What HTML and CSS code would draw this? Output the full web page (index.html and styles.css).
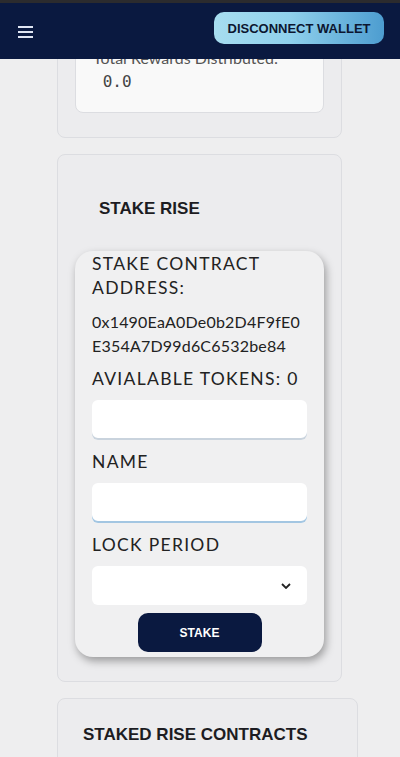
FILE: index.html
```html
<!DOCTYPE html>
<html lang="en">
<head>
    <meta charset="UTF-8">
    <meta name="viewport" content="width=device-width, initial-scale=1.0">
    <title>Stake Rise</title>
    <link rel="stylesheet" href="styles.css">
</head>
<body>
    <header class="topbar">
        <button class="menu-btn" aria-label="Menu">
            <svg width="15" height="12" viewBox="0 0 15 12">
                <rect x="0" y="0" width="15" height="2" fill="#dfe5f3"/>
                <rect x="0" y="5" width="15" height="2" fill="#dfe5f3"/>
                <rect x="0" y="10" width="15" height="2" fill="#dfe5f3"/>
            </svg>
        </button>
        <button class="wallet-btn">DISCONNECT WALLET</button>
    </header>

    <main class="page">
        <div class="card">
            <div class="info-box">
                <div class="info-label">Total Rewards Distributed:</div>
                <pre class="info-value"> 0.0</pre>
            </div>
        </div>

        <div class="card card-stake">
            <h2 class="card-title">STAKE RISE</h2>
            <div class="stake-box">
                <div class="field-label">STAKE CONTRACT ADDRESS:</div>
                <div class="address">0x1490EaA0De0b2D4F9fE0E354A7D99d6C6532be84</div>
                <div class="field-label">AVIALABLE TOKENS: 0</div>
                <input type="text" class="text-input">
                <div class="field-label">NAME</div>
                <input type="text" class="text-input focused">
                <div class="field-label">LOCK PERIOD</div>
                <div class="select-box">
                    <svg width="10" height="6" viewBox="0 0 10 6">
                        <path d="M1 1 L5 5 L9 1" fill="none" stroke="#222" stroke-width="1.8"/>
                    </svg>
                </div>
                <div class="stake-row">
                    <button class="stake-btn">STAKE</button>
                </div>
            </div>
        </div>

        <div class="card card-wide">
            <h2 class="card-title-plain">STAKED RISE CONTRACTS</h2>
        </div>
    </main>
</body>
</html>
```

FILE: styles.css
```css
body {
    margin: 0;
    background-color: #eeeeef;
    font-family: Lato, "Open Sans", sans-serif;
    color: #222;
}
.topbar {
    position: fixed;
    top: 0;
    left: 0;
    right: 0;
    height: 56px;
    border-top: 3px solid #2b2b2e;
    background-color: #0a1940;
    display: flex;
    align-items: center;
    justify-content: space-between;
    padding: 0 16px 0 18px;
    z-index: 10;
}
.menu-btn {
    background: none;
    border: none;
    padding: 0;
    margin-top: 2px;
    display: flex;
}
.wallet-btn {
    height: 32px;
    width: 170px;
    margin-top: -6px;
    border: none;
    border-radius: 10px;
    background: linear-gradient(90deg, #a7ddf0 0%, #8fd0ec 45%, #4d9dd0 100%);
    font-family: "Liberation Sans", Arial, sans-serif;
    font-weight: bold;
    font-size: 13px;
    color: #0c1630;
    padding: 0;
}
.page {
    padding: 11px 0 40px 57px;
}
.card {
    border: 1px solid #dcdde1;
    border-radius: 8px;
    background-color: #ececee;
    padding: 17px;
    padding-bottom: 24px;
    box-sizing: border-box;
    width: 285px;
    margin-bottom: 16px;
}
.info-box {
    background-color: #f9f9f9;
    border: 1px solid #dcdde1;
    border-radius: 8px;
    padding: 17px 17px 19px 17px;
}
.info-label {
    font-size: 16px;
    line-height: 22px;
    color: #555;
}
.info-value {
    margin: 2px 0 0 0;
    font-family: "DejaVu Sans Mono", monospace;
    font-size: 16px;
    line-height: 22px;
    color: #444;
}
.card-stake {
    padding-bottom: 24px;
}
.card-title {
    margin: 26px 0 31px 24px;
    font-family: "Liberation Sans", Arial, sans-serif;
    font-weight: bold;
    font-size: 17px;
    line-height: 22px;
    color: #1c1c22;
}
.stake-box {
    background-color: #f0f0f1;
    border-radius: 18px;
    box-shadow: 2px 4px 8px rgba(0, 0, 0, 0.35);
    padding: 1px 17px 5px 17px;
}
.field-label {
    font-size: 17.5px;
    line-height: 24px;
    letter-spacing: 1.3px;
    color: #222;
    margin-bottom: 9px;
}
.address {
    font-size: 16px;
    line-height: 24px;
    letter-spacing: 0.2px;
    word-break: break-all;
    color: #222;
    margin-top: 10px;
    margin-bottom: 9px;
}
.text-input {
    display: block;
    width: 100%;
    height: 40px;
    box-sizing: border-box;
    border: none;
    border-radius: 6px;
    background-color: #fff;
    box-shadow: inset 0 -2px 0 #c9d3dd;
    margin-bottom: 10px;
}
.text-input.focused {
    box-shadow: inset 0 -2px 0 #a3c6e2;
}
.select-box {
    height: 39px;
    background-color: #fff;
    border-radius: 6px;
    display: flex;
    align-items: center;
    justify-content: flex-end;
    padding-right: 16px;
    margin-bottom: 8px;
}
.stake-row {
    display: flex;
    justify-content: center;
}
.stake-btn {
    width: 124px;
    height: 39px;
    border: none;
    border-radius: 10px;
    background-color: #0a1940;
    color: #fff;
    font-family: "Liberation Sans", Arial, sans-serif;
    font-weight: bold;
    font-size: 12px;
}
.card-wide {
    width: 301px;
    padding: 25px 25px 40px 25px;
}
.card-title-plain {
    margin: 0;
    font-family: "Liberation Sans", Arial, sans-serif;
    font-weight: bold;
    font-size: 17px;
    line-height: 22px;
    color: #1c1c22;
}
```
